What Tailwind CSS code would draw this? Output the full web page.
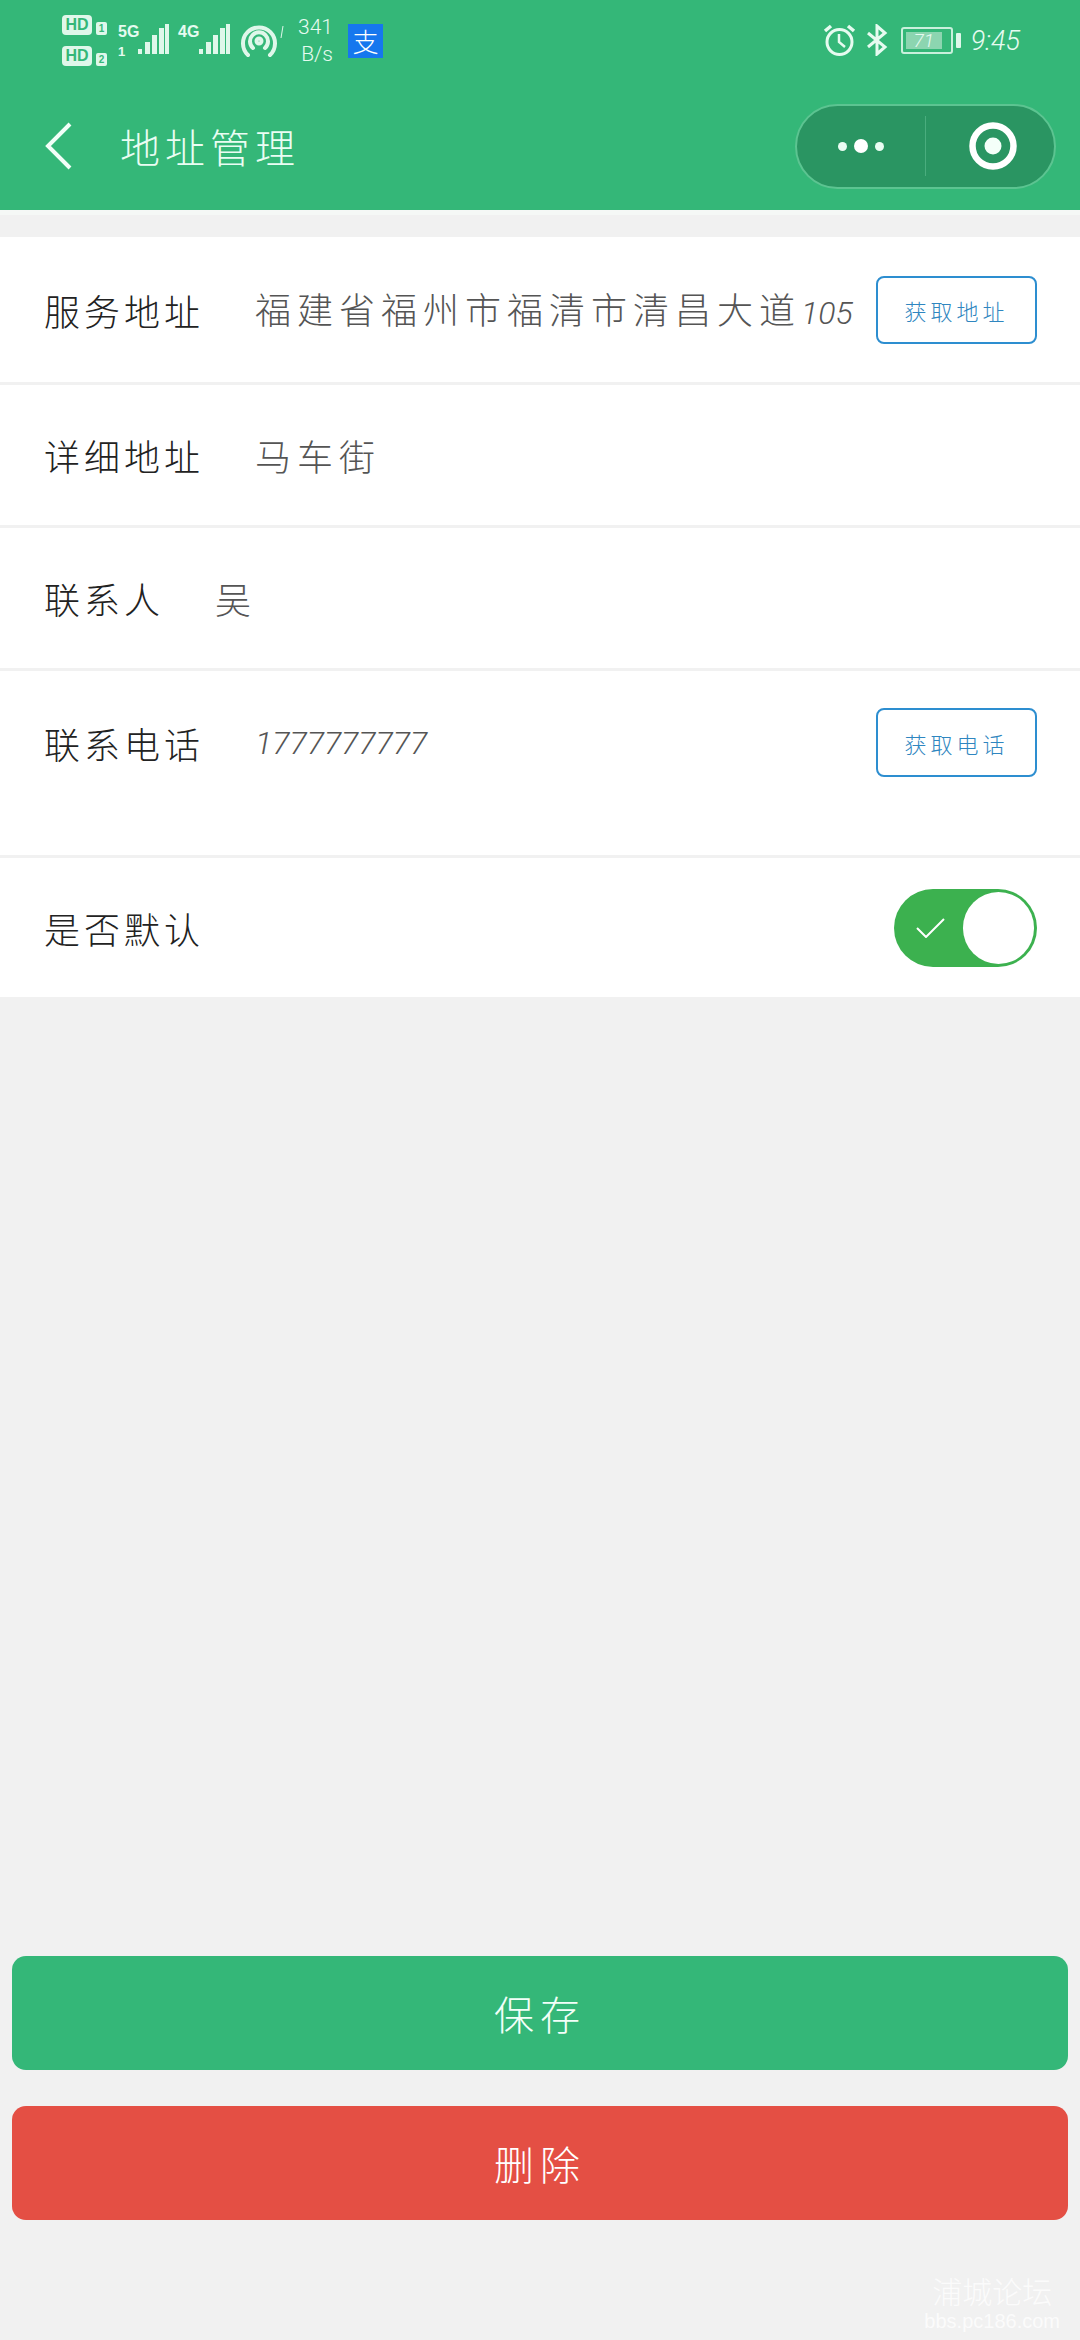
<!doctype html>
<html lang="zh">
<head>
<meta charset="utf-8">
<script src="https://cdn.jsdelivr.net/npm/@tailwindcss/browser@4"></script>
</head>
<body class="m-0">
<div class="relative flex flex-col w-[1080px] h-[2340px] overflow-hidden bg-[#f1f1f1] font-['Noto_Sans_CJK_SC','Noto_Sans',sans-serif] font-light text-[#222]">

  <header class="flex flex-col h-[210px] bg-[#34b778] text-[#e6fbf0]">
    <!-- status bar -->
    <div class="flex items-start h-[82px] pl-[62px] pr-[60px] pt-[15px]">
      <div class="flex flex-col gap-[11px] w-[47px] mr-[9px] font-['Liberation_Sans',sans-serif] font-bold">
        <div class="flex items-end gap-[4px]">
          <span class="flex items-center justify-center w-[30px] h-[20px] rounded-[4px] bg-[#dff7ea] text-[#34b778] text-[16px] leading-none">HD</span>
          <span class="flex items-center justify-center w-[11px] h-[13px] rounded-[2px] bg-[#dff7ea] text-[#34b778] text-[10px] leading-none">1</span>
        </div>
        <div class="flex items-end gap-[4px]">
          <span class="flex items-center justify-center w-[30px] h-[20px] rounded-[4px] bg-[#dff7ea] text-[#34b778] text-[16px] leading-none">HD</span>
          <span class="flex items-center justify-center w-[11px] h-[13px] rounded-[2px] bg-[#dff7ea] text-[#34b778] text-[10px] leading-none">2</span>
        </div>
      </div>
      <div class="flex flex-col w-[17px] mt-[9px] text-[16px] leading-[16px] font-['Liberation_Sans_Narrow','Liberation_Sans',sans-serif] font-bold">
        <span>5G</span><span class="mt-[5px] text-[13px] leading-[13px]">1</span>
      </div>
      <svg class="mt-[9px]" width="34" height="32" viewBox="0 0 34 32" fill="#dff7ea"><rect x="3" y="25" width="4" height="5"/><rect x="10" y="18" width="5" height="12"/><rect x="17" y="11" width="5" height="19"/><rect x="24" y="4" width="5" height="26"/><rect x="30" y="0" width="4" height="30"/></svg>
      <div class="w-[18px] ml-[9px] mt-[9px] text-[16px] leading-[16px] font-['Liberation_Sans_Narrow','Liberation_Sans',sans-serif] font-bold">4G</div>
      <svg class="mt-[9px]" width="34" height="32" viewBox="0 0 34 32" fill="#dff7ea"><rect x="3" y="25" width="4" height="5"/><rect x="10" y="18" width="5" height="12"/><rect x="17" y="11" width="5" height="19"/><rect x="24" y="4" width="5" height="26"/><rect x="30" y="0" width="4" height="30"/></svg>
      <svg class="mt-[9px] ml-[10px]" width="38" height="34" viewBox="0 0 38 34" fill="none" stroke="#dff7ea" stroke-width="4" stroke-linecap="round"><path d="M8 31 A16 16 0 1 1 30 31"/><path d="M13 24 A9 9 0 1 1 25 24"/><circle cx="19" cy="17" r="2.5"/></svg>
      <svg class="mt-[11px] ml-[2px]" width="4" height="12" viewBox="0 0 4 12" stroke="#dff7ea" stroke-width="1"><path d="M1 12L3 0"/></svg>
      <div class="flex flex-col items-end w-[37px] ml-[12px] -mt-[1px] text-[21px] leading-[27px] font-['Roboto',sans-serif] font-light">
        <span>341</span><span>B/s</span>
      </div>
      <div class="flex items-center justify-center w-[35px] h-[34px] ml-[15px] mt-[9px] bg-[#1677ee] text-white text-[26px] leading-none">支</div>

      <div class="flex-1"></div>

      <svg class="mt-[8px]" width="33" height="34" viewBox="0 0 33 34" fill="none" stroke="#e6fbf0" stroke-width="3"><circle cx="16.5" cy="19" r="12.5"/><path d="M16 11v8l6 5" stroke-width="2.5"/><path d="M2 8l6-5M31 8l-6-5" stroke-width="3.5"/></svg>
      <svg class="mt-[9px] ml-[10px]" width="22" height="32" viewBox="0 0 22 32" fill="none" stroke="#e6fbf0" stroke-width="3"><path d="M2 9l17 14-8 7V2l8 7L2 23"/></svg>
      <div class="flex items-center h-[27px] mt-[12px] ml-[13px]">
        <div class="flex items-center w-[52px] h-[27px] p-[3px] border-2 border-[#c9f0dc] rounded-[3px]">
          <div class="flex items-center justify-center w-[36px] h-full bg-[#8cd5b0] text-[#e6fbf0] text-[19px] leading-none italic font-['Roboto',sans-serif]">71</div>
        </div>
        <div class="w-[5px] h-[15px] ml-[3px] rounded-[1px] bg-[#dff7ea]"></div>
      </div>
      <div class="ml-[10px] mt-[10px] text-[27px] leading-[32px] italic font-['Roboto',sans-serif] font-light">9:45</div>
    </div>

    <!-- navigation -->
    <div class="flex items-center h-[128px] pl-[44px] pr-[24px]">
      <svg width="28" height="48" viewBox="0 0 28 48" fill="none" stroke="#f2fff8" stroke-width="4"><path d="M26 2 L4 24 L26 46"/></svg>
      <div class="ml-[48px] text-[40px] tracking-[5px] leading-none text-[#eafdf3]">地址管理</div>
      <div class="flex items-center ml-auto w-[261px] h-[85px] rounded-full bg-[#2a9562] border-2 border-[#5cc491]">
        <div class="flex items-center justify-center gap-[7px] w-[129px] h-[60px] border-r border-[#4aad7e]">
          <span class="w-[9px] h-[9px] rounded-full bg-[#eafdf3]"></span>
          <span class="w-[14px] h-[14px] rounded-full bg-white"></span>
          <span class="w-[9px] h-[9px] rounded-full bg-[#eafdf3]"></span>
        </div>
        <div class="flex flex-1 items-center justify-center pl-[6px]">
          <svg width="48" height="48" viewBox="0 0 48 48"><circle cx="24" cy="24" r="20.5" fill="none" stroke="#fff" stroke-width="6.5"/><circle cx="24" cy="24" r="8.5" fill="#f4fff9"/></svg>
        </div>
      </div>
    </div>
  </header>

  <div class="h-[5px] bg-[#f5f8f6]"></div>

  <main class="flex flex-col gap-[3px] mt-[22px]">
    <div class="flex items-center h-[145px] pl-[44px] pr-[43px] bg-white">
      <span class="w-[211px] shrink-0 text-[36px] tracking-[4px] leading-none">服务地址</span>
      <span class="flex-1 whitespace-nowrap text-[36px] tracking-[6px] leading-none text-[#555]">福建省福州市福清市清昌大道<span class="font-['Roboto',sans-serif] italic font-light text-[32px] tracking-normal">105</span></span>
      <button class="flex items-center justify-center w-[161px] h-[68px] rounded-[8px] border-2 border-[#2d8ed0] text-[22px] tracking-[4px] leading-none text-[#2f86c0]">获取地址</button>
    </div>
    <div class="flex items-center h-[140px] pl-[44px] pr-[43px] bg-white">
      <span class="w-[211px] shrink-0 text-[36px] tracking-[4px] leading-none">详细地址</span>
      <span class="text-[36px] tracking-[6px] leading-none text-[#555]">马车街</span>
    </div>
    <div class="flex items-center h-[140px] pl-[44px] pr-[43px] bg-white">
      <span class="w-[171px] shrink-0 text-[36px] tracking-[4px] leading-none">联系人</span>
      <span class="text-[36px] tracking-[6px] leading-none text-[#555]">吴</span>
    </div>
    <div class="flex items-start h-[184px] pt-[37px] pl-[44px] pr-[43px] bg-white">
      <div class="flex flex-1 items-center">
        <span class="w-[211px] shrink-0 text-[36px] tracking-[4px] leading-none">联系电话</span>
        <span class="flex-1 font-['Roboto',sans-serif] italic font-light text-[32px] leading-none text-[#555]">1777777777</span>
        <button class="flex items-center justify-center w-[161px] h-[69px] rounded-[8px] border-2 border-[#2d8ed0] text-[22px] tracking-[4px] leading-none text-[#2f86c0]">获取电话</button>
      </div>
    </div>
    <div class="flex items-center h-[139px] pl-[44px] pr-[43px] bg-white">
      <span class="text-[36px] tracking-[4px] leading-none">是否默认</span>
      <div class="flex items-center ml-auto w-[143px] h-[78px] p-[3px] rounded-full bg-[#3cb14f]">
        <svg class="ml-[19px]" width="29" height="20" viewBox="0 0 29 20" fill="none" stroke="#fff" stroke-width="2"><path d="M1 10l9 9L28 1"/></svg>
        <span class="ml-auto w-[71px] h-[72px] rounded-full bg-white"></span>
      </div>
    </div>
  </main>

  <div class="flex flex-col gap-[36px] mt-auto mb-[120px] px-[12px]">
    <button class="flex items-center justify-center h-[114px] rounded-[14px] bg-[#34b778] text-[40px] tracking-[6px] leading-none text-[#f2fff8]">保存</button>
    <button class="flex items-center justify-center h-[114px] rounded-[14px] bg-[#e44f44] text-[40px] tracking-[6px] leading-none text-white">删除</button>
  </div>

  <div class="absolute right-[20px] bottom-[9px] flex flex-col items-center text-white/75">
    <span class="text-[30px] leading-[36px]">浦城论坛</span>
    <span class="font-['Liberation_Sans',sans-serif] text-[20px] leading-[20px] mt-[3px]">bbs.pc186.com</span>
  </div>
</div>
</body>
</html>
